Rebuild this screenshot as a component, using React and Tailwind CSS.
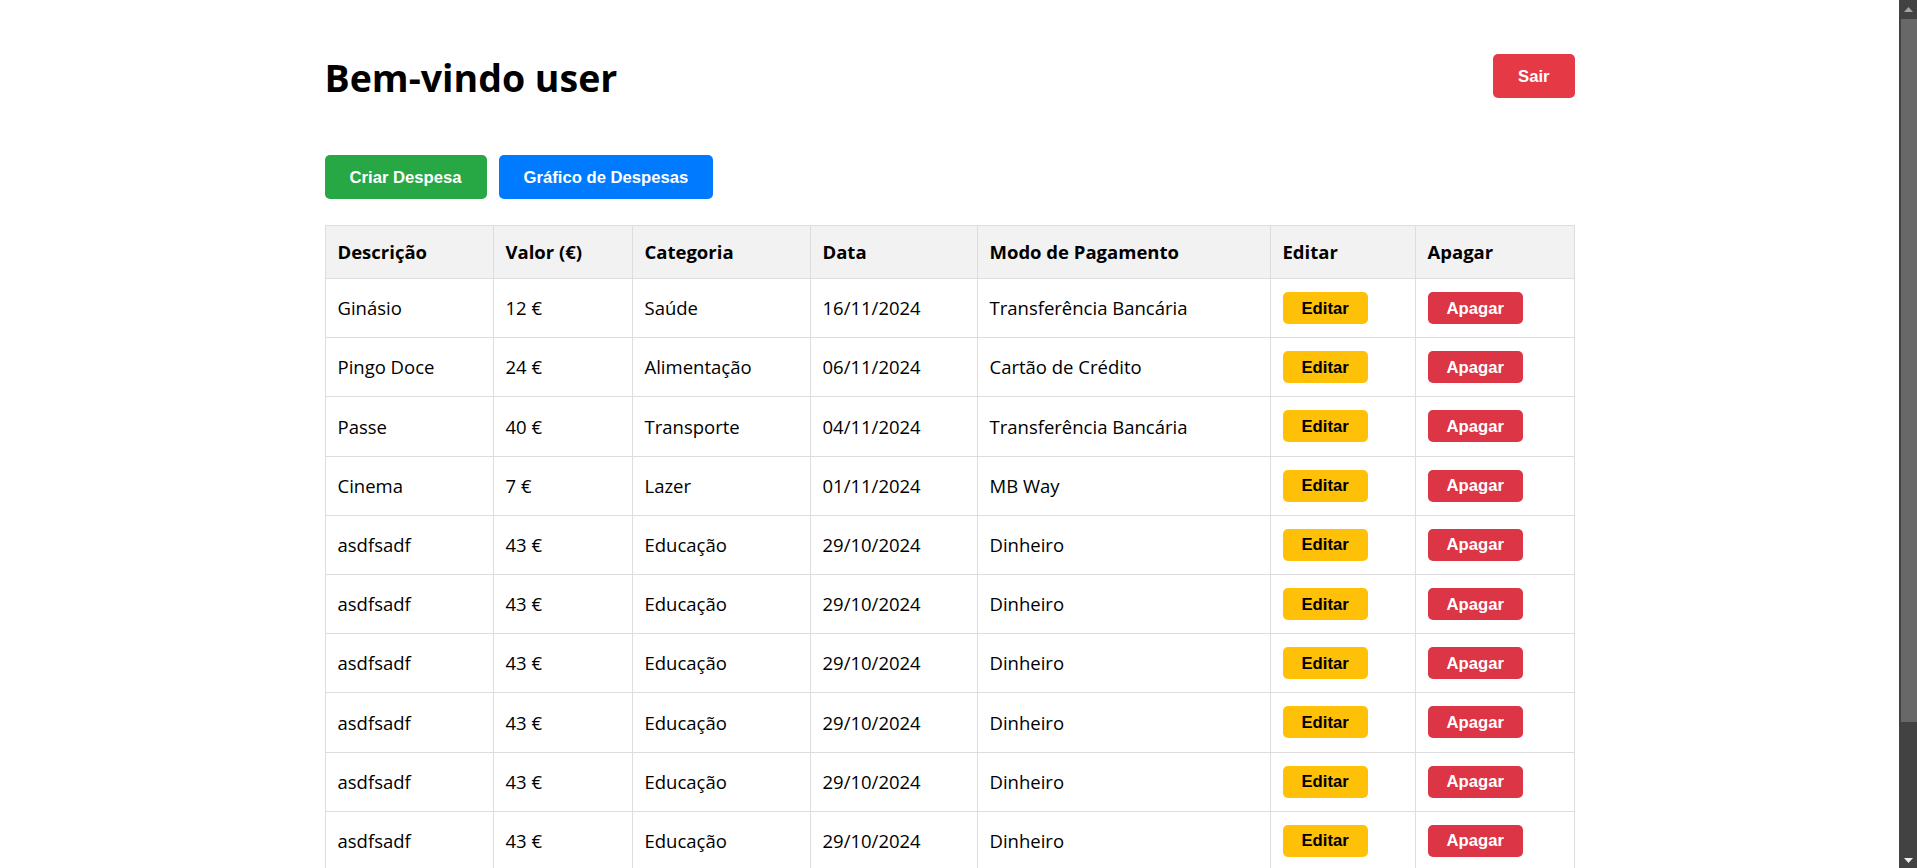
import React from 'react';

const despesas = [
  { descricao: 'Ginásio', valor: 12, categoria: 'Saúde', data: '16/11/2024', pagamento: 'Transferência Bancária' },
  { descricao: 'Pingo Doce', valor: 24, categoria: 'Alimentação', data: '06/11/2024', pagamento: 'Cartão de Crédito' },
  { descricao: 'Passe', valor: 40, categoria: 'Transporte', data: '04/11/2024', pagamento: 'Transferência Bancária' },
  { descricao: 'Cinema', valor: 7, categoria: 'Lazer', data: '01/11/2024', pagamento: 'MB Way' },
  { descricao: 'asdfsadf', valor: 43, categoria: 'Educação', data: '29/10/2024', pagamento: 'Dinheiro' },
  { descricao: 'asdfsadf', valor: 43, categoria: 'Educação', data: '29/10/2024', pagamento: 'Dinheiro' },
  { descricao: 'asdfsadf', valor: 43, categoria: 'Educação', data: '29/10/2024', pagamento: 'Dinheiro' },
  { descricao: 'asdfsadf', valor: 43, categoria: 'Educação', data: '29/10/2024', pagamento: 'Dinheiro' },
  { descricao: 'asdfsadf', valor: 43, categoria: 'Educação', data: '29/10/2024', pagamento: 'Dinheiro' },
  { descricao: 'asdfsadf', valor: 43, categoria: 'Educação', data: '29/10/2024', pagamento: 'Dinheiro' },
];

const headers = ['Descrição', 'Valor (€)', 'Categoria', 'Data', 'Modo de Pagamento', 'Editar', 'Apagar'];

// fake scrollbar, the screenshot was taken with the page scrolled to the top
function Scrollbar() {
  return (
    <div className="flex flex-col w-[18px] h-full bg-[#424242] shrink-0">
      <div className="h-[19px] flex items-start justify-center pt-[7px] pl-[1px]">
        <svg width="9" height="5" viewBox="0 0 9 5">
          <polygon points="4.5,0 9,5 0,5" fill="#a3a3a3" />
        </svg>
      </div>
      <div className="ml-[2px] h-[703px] bg-[#686868]" />
      <div className="flex-1" />
      <div className="h-[10px] flex items-start justify-center pl-[1px]">
        <svg width="9" height="5" viewBox="0 0 9 5">
          <polygon points="0,0 9,0 4.5,5" fill="#f0f0f0" />
        </svg>
      </div>
    </div>
  );
}

const btn = "h-[44px] px-[25px] rounded-[5px] text-white font-bold text-[16.67px] font-['Liberation_Sans',Arial,sans-serif]";
const smallBtn = "h-[32px] px-[19px] rounded-[5px] font-bold text-[16.67px] font-['Liberation_Sans',Arial,sans-serif]";

function App() {
  return (
    <div className="flex h-[868px] w-full overflow-hidden bg-white">
      <div className="flex-1 overflow-hidden">
        <div className="w-[1250px] mx-auto pt-[54px] font-['Open_Sans',sans-serif] text-black">
          <div className="flex justify-between items-start h-[48px]">
            <h1 className="text-[37.5px] leading-[48px] font-bold">Bem-vindo user</h1>
            <button className={`${btn} bg-[#e63946]`}>Sair</button>
          </div>

          <div className="flex gap-[12px] mt-[53px]">
            <button className={`${btn} bg-[#28a745]`}>Criar Despesa</button>
            <button className={`${btn} bg-[#007bff]`}>Gráfico de Despesas</button>
          </div>

          <table className="mt-[26px] w-[1249px] table-fixed border-collapse text-[18.5px]">
            <colgroup>
              <col className="w-[168px]" />
              <col className="w-[139px]" />
              <col className="w-[178px]" />
              <col className="w-[167px]" />
              <col className="w-[293px]" />
              <col className="w-[145px]" />
              <col className="w-[159px]" />
            </colgroup>
            <thead>
              <tr className="bg-[#f2f2f2]">
                {headers.map((h) => (
                  <th key={h} className="h-[53px] px-[12px] border border-[#dddddd] text-left font-bold align-middle">
                    {h}
                  </th>
                ))}
              </tr>
            </thead>
            <tbody>
              {despesas.map((d, idx) => (
                <tr key={idx}>
                  <td className="h-[59.2px] px-[12px] border border-[#dddddd] align-middle">{d.descricao}</td>
                  <td className="px-[12px] border border-[#dddddd] align-middle">{d.valor} €</td>
                  <td className="px-[12px] border border-[#dddddd] align-middle">{d.categoria}</td>
                  <td className="px-[12px] border border-[#dddddd] align-middle">{d.data}</td>
                  <td className="px-[12px] border border-[#dddddd] align-middle">{d.pagamento}</td>
                  <td className="px-[12px] border border-[#dddddd] align-middle">
                    <button className={`${smallBtn} bg-[#ffc107] text-black`}>Editar</button>
                  </td>
                  <td className="px-[12px] border border-[#dddddd] align-middle">
                    <button className={`${smallBtn} bg-[#dc3545] text-white`}>Apagar</button>
                  </td>
                </tr>
              ))}
            </tbody>
          </table>
        </div>
      </div>
      <Scrollbar />
    </div>
  );
}

export default App;
